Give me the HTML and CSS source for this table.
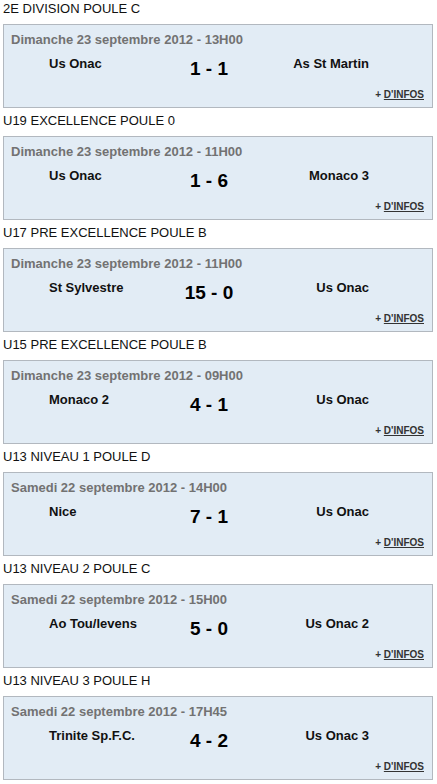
FILE: index.html
```html
<!DOCTYPE html>
<html lang="fr">
<head>
<meta charset="utf-8">
<title>Résultats</title>
<link rel="stylesheet" href="styles.css">
</head>
<body>
<div class="list">
  <section class="comp">
    <h2 class="comp-title">2E DIVISION POULE C</h2>
    <div class="match">
      <div class="date">Dimanche 23 septembre 2012 - 13H00</div>
      <div class="row"><span class="home">Us Onac</span><span class="score">1 - 1</span><span class="away">As St Martin</span></div>
      <div class="more">+ <a href="#">D'INFOS</a></div>
    </div>
  </section>
  <section class="comp">
    <h2 class="comp-title">U19 EXCELLENCE POULE 0</h2>
    <div class="match">
      <div class="date">Dimanche 23 septembre 2012 - 11H00</div>
      <div class="row"><span class="home">Us Onac</span><span class="score">1 - 6</span><span class="away">Monaco 3</span></div>
      <div class="more">+ <a href="#">D'INFOS</a></div>
    </div>
  </section>
  <section class="comp">
    <h2 class="comp-title">U17 PRE EXCELLENCE POULE B</h2>
    <div class="match">
      <div class="date">Dimanche 23 septembre 2012 - 11H00</div>
      <div class="row"><span class="home">St Sylvestre</span><span class="score">15 - 0</span><span class="away">Us Onac</span></div>
      <div class="more">+ <a href="#">D'INFOS</a></div>
    </div>
  </section>
  <section class="comp">
    <h2 class="comp-title">U15 PRE EXCELLENCE POULE B</h2>
    <div class="match">
      <div class="date">Dimanche 23 septembre 2012 - 09H00</div>
      <div class="row"><span class="home">Monaco 2</span><span class="score">4 - 1</span><span class="away">Us Onac</span></div>
      <div class="more">+ <a href="#">D'INFOS</a></div>
    </div>
  </section>
  <section class="comp">
    <h2 class="comp-title">U13 NIVEAU 1 POULE D</h2>
    <div class="match">
      <div class="date">Samedi 22 septembre 2012 - 14H00</div>
      <div class="row"><span class="home">Nice</span><span class="score">7 - 1</span><span class="away">Us Onac</span></div>
      <div class="more">+ <a href="#">D'INFOS</a></div>
    </div>
  </section>
  <section class="comp">
    <h2 class="comp-title">U13 NIVEAU 2 POULE C</h2>
    <div class="match">
      <div class="date">Samedi 22 septembre 2012 - 15H00</div>
      <div class="row"><span class="home">Ao Tou/levens</span><span class="score">5 - 0</span><span class="away">Us Onac 2</span></div>
      <div class="more">+ <a href="#">D'INFOS</a></div>
    </div>
  </section>
  <section class="comp">
    <h2 class="comp-title">U13 NIVEAU 3 POULE H</h2>
    <div class="match">
      <div class="date">Samedi 22 septembre 2012 - 17H45</div>
      <div class="row"><span class="home">Trinite Sp.F.C.</span><span class="score">4 - 2</span><span class="away">Us Onac 3</span></div>
      <div class="more">+ <a href="#">D'INFOS</a></div>
    </div>
  </section>
</div>
</body>
</html>
```
FILE: styles.css
```css
html, body {
  margin: 0;
  padding: 0;
  background: #ffffff;
}
body {
  font-family: "Liberation Sans", Arial, sans-serif;
  color: #000;
}
.list {
  padding: 0 3px;
}
.comp-title {
  margin: 0;
  padding: 1px 0 8px 0;
  font-size: 13px;
  line-height: 15px;
  font-weight: normal;
  color: #111;
}
.match {
  box-sizing: border-box;
  width: 430px;
  margin-bottom: 4px;
  border: 1px solid #b2b8bf;
  background: #e2ecf5;
  padding: 7px 8px 6px 7px;
}
.date {
  font-size: 13px;
  line-height: 15px;
  font-weight: bold;
  color: #727272;
}
.row {
  display: grid;
  grid-template-columns: 1fr 60px 1fr;
  align-items: start;
  margin: 9px 55px 0 38px;
  height: 25px;
}
.home, .away {
  font-size: 13px;
  line-height: 15px;
  font-weight: bold;
  color: #111;
}
.away {
  text-align: right;
}
.score {
  font-size: 19px;
  line-height: 23px;
  font-weight: bold;
  color: #000;
  text-align: center;
  padding-top: 1px;
  white-space: nowrap;
}
.more {
  margin-top: 8px;
  text-align: right;
  font-size: 10px;
  line-height: 12px;
  font-weight: bold;
  color: #333;
}
.more a {
  color: #333;
  text-decoration: underline;
}
```
